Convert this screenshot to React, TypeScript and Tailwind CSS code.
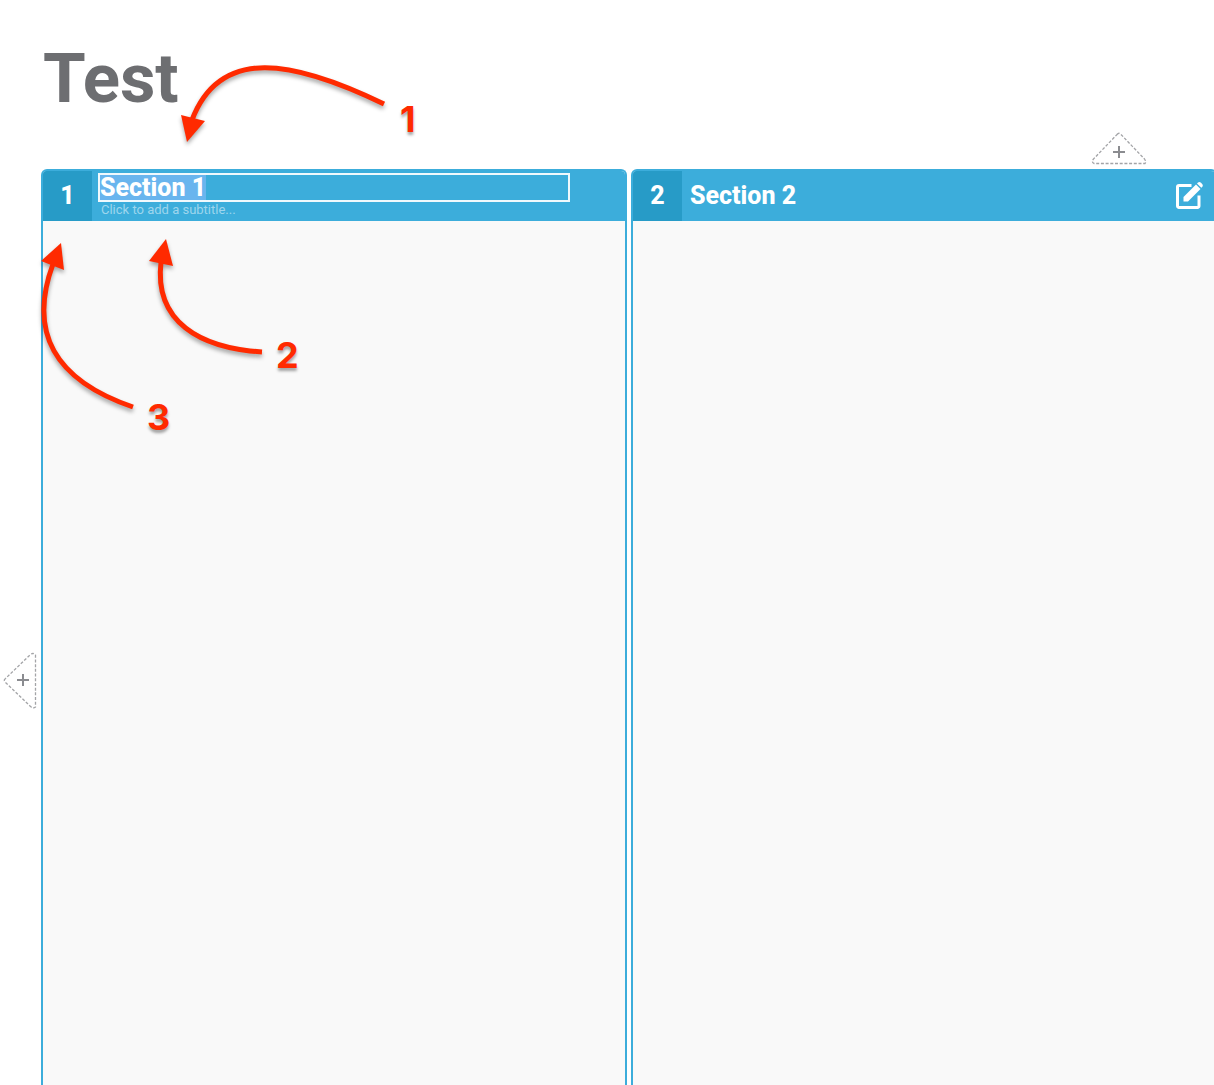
import { useEffect, useRef } from "react";

function AddTriangle({ points, plus, className, width, height, label }: {
  points: string;
  plus: string;
  className: string;
  width: number;
  height: number;
  label: string;
}) {
  return (
    <button type="button" aria-label={label} className={className}>
      <svg width={width} height={height} fill="none">
        <path d={points} fill="#fff" stroke="#a3a4a7" strokeWidth="1.3" strokeDasharray="3 1.7" />
        <path d={plus} stroke="#8b8c90" strokeWidth="2" />
      </svg>
    </button>
  );
}

function EditIcon() {
  return (
    <svg width="28" height="28" viewBox="0 0 28 28" fill="none">
      <path d="M16.500 4.500H4a1.500 1.500 0 0 0-1.500 1.500v19A1.500 1.500 0 0 0 4 26.500h18.500a1.500 1.500 0 0 0 1.500-1.500V14.500" stroke="#fff" strokeWidth="3" />
      <path d="M8.500 20.500v-4.500L21 3.500l4.500 4.500L13 20.500z" fill="#fff" />
      <path d="M22 2.500l1-1q1.500-1.200 3 .2l1.200 1.200q1.200 1.500 0 3l-.9.900z" fill="#fff" />
    </svg>
  );
}

function Annotations() {
  return (
    <div className="pointer-events-none absolute top-0 left-0 font-['Inter',sans-serif] text-[36px] leading-10 font-bold text-[#ff2a00]">
      <svg width="430" height="450" fill="none" className="[filter:drop-shadow(0_3px_2px_rgba(0,0,0,0.35))]">
        <g stroke="#ff2a00" strokeWidth="5">
          <path d="M384 104C293 60 220 46 192 120" />
          <path d="M262 352C200 348 154 322 161 262" />
          <path d="M133 407C54 380 28 332 53 264" />
        </g>
        <g fill="#ff2a00">
          <path d="M181 115l24 6-18 21z" />
          <path d="M166 239l-17 22 24 5z" />
          <path d="M61 243l-20 18 23 9z" />
        </g>
      </svg>
      <span className="absolute top-[99px] left-[400px] [text-shadow:0_3px_3px_rgba(0,0,0,0.35)]">1</span>
      <span className="absolute top-[335px] left-[276px] [text-shadow:0_3px_3px_rgba(0,0,0,0.35)]">2</span>
      <span className="absolute top-[397px] left-[147px] [text-shadow:0_3px_3px_rgba(0,0,0,0.35)]">3</span>
    </div>
  );
}

export default function App() {
  const titleRef = useRef<HTMLInputElement>(null);

  useEffect(() => {
    titleRef.current?.focus();
    titleRef.current?.select();
  }, []);

  return (
    <div className="relative flex min-h-screen flex-col overflow-hidden bg-white font-['Roboto',sans-serif] text-white">
      <header className="flex items-end justify-between pr-[67px] pl-[43px]">
        <h1 className="pt-[37px] pb-[49px] text-[69px] leading-[83px] font-bold text-[#6d6e71]">Test</h1>
        <AddTriangle
          label="Add section above"
          className="mb-[3px]"
          width={56}
          height={34}
          points="M26 2.500Q28 0 30 2.500L53.500 27Q55.500 30 54 31.500H3Q0 30 2.500 27Z"
          plus="M28 14v12M22 20h12"
        />
      </header>
      <main className="-mr-[3px] flex grow">
        <div className="w-[41px] shrink-0 pt-[483px] pl-[3px]">
          <AddTriangle
            label="Add section to the left"
            className="block"
            width={34}
            height={58}
            points="M2.500 26.500Q0 28.500 2.500 30.500L27 54Q30 57 32.500 55V3Q30 0 27 3Z"
            plus="M20 22v12M14 28h12"
          />
        </div>
        <div className="grid grow grid-cols-2 gap-1">
          <section className="flex flex-col overflow-hidden rounded-t-md border-2 border-b-0 border-[#3caddb] bg-[#f9f9f9]">
            <div className="flex h-[50px] bg-[#3caddb]">
              <div className="flex w-[49px] items-center justify-center bg-[#279bc7] text-[25px] font-extrabold">1</div>
              <div className="flex grow flex-col pt-0.5 pr-[55px] pl-1.5">
                <input
                  ref={titleRef}
                  aria-label="Section title"
                  defaultValue="Section 1"
                  className="h-[29px] w-full border-2 border-[#f0f9fd] text-[25px] leading-6 font-extrabold text-white caret-transparent outline-none selection:bg-[#69b5ee] selection:text-white"
                />
                <button type="button" className="self-start pl-[3px] text-[13px] leading-4 text-[#9ed6ed]">Click to add a subtitle...</button>
              </div>
            </div>
          </section>
          <section className="flex flex-col overflow-hidden rounded-t-md border-2 border-b-0 border-[#3caddb] bg-[#f9f9f9]">
            <div className="flex h-[50px] items-center bg-[#3caddb] pr-3">
              <div className="flex w-[49px] items-center justify-center self-stretch bg-[#279bc7] text-[25px] font-extrabold">2</div>
              <h2 className="grow pl-2 text-[25px] font-extrabold">Section 2</h2>
              <button type="button" aria-label="Edit section" className="pb-0.5"><EditIcon /></button>
            </div>
          </section>
        </div>
      </main>
      <Annotations />
    </div>
  );
}
